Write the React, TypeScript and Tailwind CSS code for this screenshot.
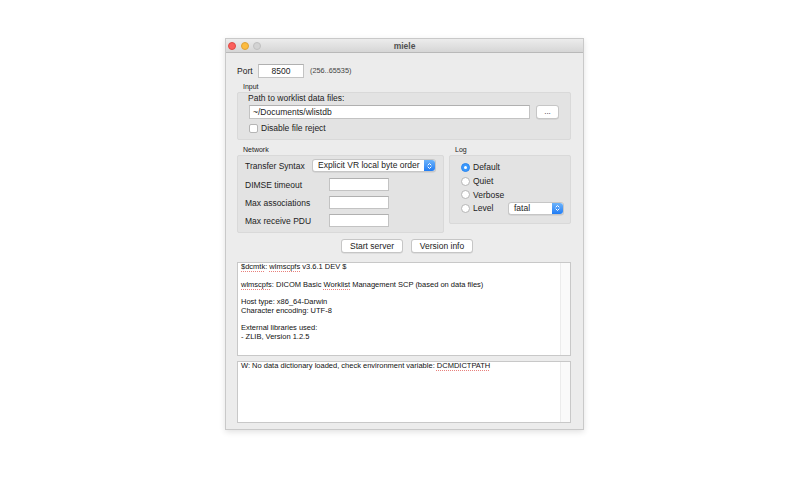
import React from 'react';

// macOS-style popup arrows (blue segment on the right)
const PopupArrows: React.FC<{ w?: string }> = ({ w = 'w-[11px]' }) => (
  <div className={`${w} h-full rounded-r-[3px] bg-linear-to-b from-[#6cb3fa] to-[#1f7cf4] flex items-center justify-center`}>
    <svg width="5" height="8" viewBox="0 0 5 8" fill="none" stroke="white" strokeWidth="1" strokeLinecap="round" strokeLinejoin="round">
      <path d="M1 3 L2.5 1.5 L4 3" />
      <path d="M1 5 L2.5 6.5 L4 5" />
    </svg>
  </div>
);

const Field: React.FC<{ className?: string; children?: React.ReactNode }> = ({ className = '', children }) => (
  <div className={`bg-white border border-[#c3c3c3] border-t-[#b0b0b0] flex items-center ${className}`}>{children}</div>
);

const Radio: React.FC<{ on?: boolean }> = ({ on }) =>
  on ? (
    <div className="w-[9px] h-[9px] rounded-full bg-[#3b99fc] border border-[#2a86f0] flex items-center justify-center">
      <div className="w-[3px] h-[3px] rounded-full bg-white" />
    </div>
  ) : (
    <div className="w-[9px] h-[9px] rounded-full bg-white border border-[#b5b5b5]" />
  );

const Button: React.FC<{ children: React.ReactNode }> = ({ children }) => (
  <button className="w-[62px] h-[14px] bg-white border border-[#c6c6c6] rounded-[3px] shadow-[0_0.5px_0.5px_rgba(0,0,0,0.12)] text-[8.5px] leading-[12px] text-[#222]">
    {children}
  </button>
);

const Spell: React.FC<{ children: React.ReactNode }> = ({ children }) => (
  <span className="underline decoration-dotted decoration-[#e8807c] underline-offset-[1.5px]">{children}</span>
);

export default function App() {
  return (
    <div className="w-[800px] h-[500px] bg-white pl-[225px] pt-[38px] font-['Liberation_Sans',Arial,sans-serif] text-[#222]">
      <div className="w-[359px] h-[392px] bg-[#ececec] border border-[#c9c9c9] shadow-[0_2px_6px_rgba(0,0,0,0.12)] flex flex-col">
        {/* Title bar */}
        <div className="h-[14px] shrink-0 grid grid-cols-[40px_1fr_40px] items-center bg-linear-to-b from-[#ececec] to-[#d6d6d6] border-b border-[#b9b9b9]">
          <div className="flex items-center gap-[4.5px] pl-[2px]">
            <div className="w-[8px] h-[8px] rounded-full bg-[#fc605c] border-[0.5px] border-[#de4a45]" />
            <div className="w-[8px] h-[8px] rounded-full bg-[#fdbc40] border-[0.5px] border-[#dea135]" />
            <div className="w-[8px] h-[8px] rounded-full bg-[#d3d3d3] border-[0.5px] border-[#c0c0c0]" />
          </div>
          <div className="text-center text-[8.5px] leading-[10px] font-semibold text-[#505050]">miele</div>
          <div />
        </div>

        {/* Content */}
        <div className="flex flex-col pl-[11px] pr-[12px]">
          {/* Port */}
          <div className="mt-[11px] h-[14px] flex items-center">
            <span className="text-[8.5px] leading-[10px] w-[21px]">Port</span>
            <Field className="w-[46px] h-[14px] justify-center">
              <span className="text-[8.5px] leading-[10px]">8500</span>
            </Field>
            <span className="ml-[6px] text-[7.3px] leading-[8px] text-[#444]">(256..65535)</span>
          </div>

          {/* Input group */}
          <div className="mt-[5px] h-[8px] pl-[6px] text-[7px] leading-[8px]">Input</div>
          <div className="mt-[1px] h-[48px] bg-[#e3e3e3] border border-[#d9d9d9] rounded-[2px] pl-[10px] pr-[11px] flex flex-col">
            <div className="h-[10px] text-[8.5px] leading-[10px]">Path to worklist data files:</div>
            <div className="mt-[2px] flex items-center">
              <Field className="ml-[1px] w-[281px] h-[14px] px-[3px]">
                <span className="text-[8.5px] leading-[10px]">~/Documents/wlistdb</span>
              </Field>
              <button className="ml-[6px] w-[23px] h-[14px] bg-white border border-[#c6c6c6] rounded-[3px] text-[8px] leading-[10px] shadow-[0_0.5px_0.5px_rgba(0,0,0,0.12)]">
                ...
              </button>
            </div>
            <div className="mt-[4px] flex items-center gap-[3px] ml-[1px]">
              <div className="w-[9px] h-[9px] bg-white border border-[#b5b5b5] rounded-[2px]" />
              <span className="text-[8.5px] leading-[10px]">Disable file reject</span>
            </div>
          </div>

          {/* Network + Log */}
          <div className="mt-[6px] flex gap-[5px]">
            <div className="w-[207px] flex flex-col">
              <div className="h-[8px] pl-[6px] text-[7px] leading-[8px]">Network</div>
              <div className="mt-[1px] h-[78px] bg-[#e3e3e3] border border-[#d9d9d9] rounded-[2px] pl-[7px] pt-[3px] flex flex-col">
                <div className="h-[13px] flex items-center">
                  <span className="w-[67px] text-[8.5px] leading-[10px]">Transfer Syntax</span>
                  <div className="w-[124px] h-[13px] flex bg-white border border-[#c6c6c6] rounded-[3px] shadow-[0_0.5px_0.5px_rgba(0,0,0,0.12)]">
                    <span className="flex-1 pl-[5px] text-[8.5px] leading-[11px]">Explicit VR local byte order</span>
                    <PopupArrows />
                  </div>
                </div>
                <div className="mt-[6px] flex flex-col gap-[5px]">
                  {['DIMSE timeout', 'Max associations', 'Max receive PDU'].map((l) => (
                    <div key={l} className="h-[13px] flex items-center">
                      <span className="w-[84px] text-[8.5px] leading-[10px]">{l}</span>
                      <Field className="w-[60px] h-[13px]" />
                    </div>
                  ))}
                </div>
              </div>
            </div>

            <div className="w-[122px] flex flex-col">
              <div className="h-[8px] pl-[6px] text-[7px] leading-[8px]">Log</div>
              <div className="mt-[1px] h-[69px] bg-[#e3e3e3] border border-[#d9d9d9] rounded-[2px] pl-[11px] pt-[4.5px] flex flex-col">
                {['Default', 'Quiet', 'Verbose'].map((l, i) => (
                  <div key={l} className="h-[13.7px] flex items-center gap-[3px]">
                    <Radio on={i === 0} />
                    <span className="text-[8.5px] leading-[10px]">{l}</span>
                  </div>
                ))}
                <div className="h-[13.7px] flex items-center gap-[3px]">
                  <Radio />
                  <span className="w-[32px] text-[8.5px] leading-[10px]">Level</span>
                  <div className="w-[56px] h-[13px] flex bg-white border border-[#c6c6c6] rounded-[3px] shadow-[0_0.5px_0.5px_rgba(0,0,0,0.12)]">
                    <span className="flex-1 pl-[5px] text-[8.5px] leading-[11px]">fatal</span>
                    <PopupArrows />
                  </div>
                </div>
              </div>
            </div>
          </div>

          {/* Buttons */}
          <div className="mt-[6px] ml-[104px] flex gap-[8px]">
            <Button>Start server</Button>
            <Button>Version info</Button>
          </div>

          {/* Output text area */}
          <div className="mt-[9px] h-[94px] flex bg-white border border-[#c8c8c8]">
            <div className="flex-1 pl-[3px] text-[7.5px] leading-[8.75px] text-[#111]">
              <div><Spell>$dcmtk</Spell>: <Spell>wlmscpfs</Spell> v3.6.1 DEV $</div>
              <div>&nbsp;</div>
              <div><Spell>wlmscpfs</Spell>: DICOM Basic <Spell>Worklist</Spell> Management SCP (based on data files)</div>
              <div>&nbsp;</div>
              <div>Host type: x86_64-Darwin</div>
              <div>Character encoding: UTF-8</div>
              <div>&nbsp;</div>
              <div>External libraries used:</div>
              <div>- ZLIB, Version 1.2.5</div>
            </div>
            <div className="w-[10px] bg-[#fafafa] border-l border-[#ececec]" />
          </div>

          {/* Error text area */}
          <div className="mt-[5px] h-[62px] flex bg-white border border-[#c8c8c8]">
            <div className="flex-1 pl-[3px] text-[7.5px] leading-[8.75px] text-[#111]">
              W: No data dictionary loaded, check environment variable: <Spell>DCMDICTPATH</Spell>
            </div>
            <div className="w-[10px] bg-[#fafafa] border-l border-[#ececec]" />
          </div>
        </div>
      </div>
    </div>
  );
}
